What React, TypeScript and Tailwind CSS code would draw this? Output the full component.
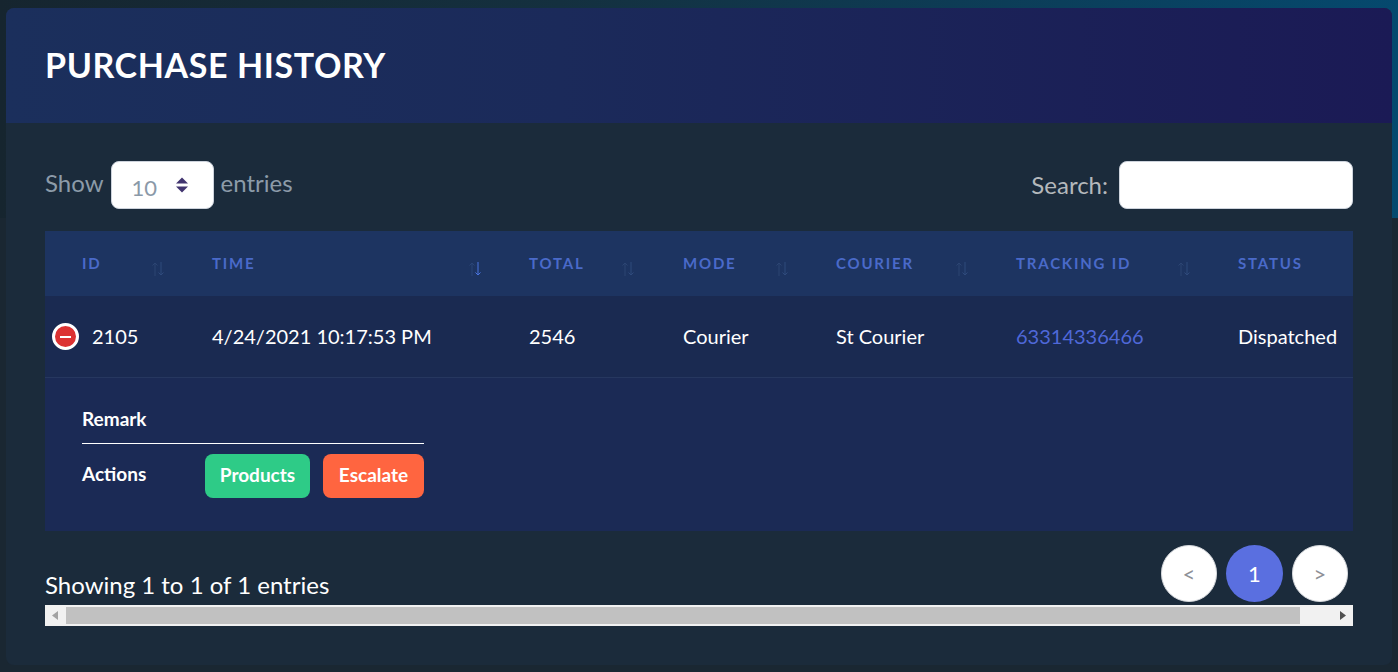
import { ChevronDown } from 'lucide-react';

const font = { fontFamily: 'Lato, "Open Sans", sans-serif' };

// header cells: label, column width, sort arrows position
const columns = [
  { label: 'ID', width: 'w-[130px]', sort: 'left-[105px]' },
  { label: 'TIME', width: 'w-[317px]', sort: 'left-[292px]', active: true },
  { label: 'TOTAL', width: 'w-[154px]', sort: 'left-[128px]' },
  { label: 'MODE', width: 'w-[153px]', sort: 'left-[128px]' },
  { label: 'COURIER', width: 'w-[180px]', sort: 'left-[155px]' },
  { label: 'TRACKING ID', width: 'w-[222px]', sort: 'left-[197px]' },
  { label: 'STATUS', width: 'w-[152px]' },
];

function SortArrows({ active }: { active?: boolean }) {
  return (
    <svg width="16" height="18" viewBox="0 0 16 18" fill="none" strokeWidth="1">
      <path d="M5 16V3M2.5 5.5 5 3l2.5 2.5" stroke={active ? '#2a4577' : '#2c4573'} />
      <path d="M11 2v13M8.5 12.5 11 15l2.5-2.5" stroke={active ? '#4a74e0' : '#2f4a7c'} />
    </svg>
  );
}

function PageButton({ label, current }: { label: string; current?: boolean }) {
  return (
    <div
      className={
        current
          ? 'flex h-[57px] w-[57px] items-center justify-center rounded-full bg-[#5a6fe0] text-[22px] text-white'
          : 'flex h-[57px] w-[56px] items-center justify-center rounded-full border border-[#d5d8dc] bg-white text-[22px] text-[#8d9096]'
      }
    >
      {label}
    </div>
  );
}

export default function App() {
  return (
    <div
      style={font}
      className="h-[672px] w-[1398px] overflow-hidden bg-[linear-gradient(90deg,#16252f_0%,#14303f_40%,#05496e_100%)]"
    >
      <div className="h-[672px] bg-[linear-gradient(180deg,transparent_0,transparent_218px,#1a2732_218px)] pl-[6px] pr-[6px] pt-[8px]">
        <div className="h-[657px] overflow-hidden rounded-lg bg-[#1b2b3b]">
          {/* Card header */}
          <div className="flex h-[115px] items-center bg-[linear-gradient(90deg,#1b2f5c_0%,#1b2a5a_40%,#1b1a55_100%)] pb-[2px] pl-[39px]">
            <h1 className="text-[34px] font-bold tracking-[0.6px] text-white">PURCHASE HISTORY</h1>
          </div>

          <div className="px-[39px] pt-[38px]">
            {/* Length and search controls */}
            <div className="flex h-[48px] items-center justify-between">
              <div className="flex items-center gap-[7px] text-[24px] text-[#8c9ba9]">
                <span className="relative -top-[2px]">Show</span>
                <div className="flex h-[48px] w-[103px] items-center justify-between rounded-lg border border-[#cdd3dc] bg-white pl-[20px] pr-[24px] text-[22px] text-[#8a99a8]">
                  <span className="relative top-[2px]">10</span>
                  <svg width="14" height="16" viewBox="0 0 14 16" fill="#41346f">
                    <path d="M7 0.5 13 6.5H1Z" />
                    <path d="M7 15.5 1 9.5H13Z" />
                  </svg>
                </div>
                <span className="relative -top-[2px]">entries</span>
              </div>
              <div className="flex items-center gap-[11px] text-[24px] text-[#b4b8bb]">
                <span>Search:</span>
                <input className="h-[48px] w-[234px] rounded-lg border border-[#cdd3dc] bg-white" />
              </div>
            </div>

            {/* Table */}
            <table className="mt-[22px] w-[1308px] table-fixed border-collapse">
              <thead>
                <tr className="h-[65px] bg-[#1d3461]">
                  {columns.map((col) => (
                    <th key={col.label} className={`relative ${col.width} p-0 pl-[37px] text-left align-middle`}>
                      <span className="relative -top-[1px] text-[15px] font-bold tracking-[1.8px] text-[#4a6ac9]">{col.label}</span>
                      {col.sort && (
                        <span className={`absolute top-[29px] ${col.sort}`}>
                          <SortArrows active={col.active} />
                        </span>
                      )}
                    </th>
                  ))}
                </tr>
              </thead>
              <tbody>
                <tr className="h-[81px] border-b border-[#26375f] bg-[#1a2a51] text-[20px] text-white">
                  <td className="relative p-0 pl-[47px]">
                    <span className="absolute left-[7px] top-[27px] flex h-[27px] w-[27px] items-center justify-center rounded-full border-[3px] border-white bg-[#dc3232]">
                      <span className="h-[2px] w-[11px] bg-white" />
                    </span>
                    2105
                  </td>
                  <td className="p-0 pl-[37px]">4/24/2021 10:17:53 PM</td>
                  <td className="p-0 pl-[37px]">2546</td>
                  <td className="p-0 pl-[37px]">Courier</td>
                  <td className="p-0 pl-[37px]">St Courier</td>
                  <td className="p-0 pl-[37px] text-[#4f68d8]">63314336466</td>
                  <td className="p-0 pl-[37px]">Dispatched</td>
                </tr>
                <tr className="h-[154px] bg-[#1b2a55]">
                  <td colSpan={7} className="p-0 pl-[37px] align-top">
                    <div className="w-[342px] text-[19px] font-bold text-white">
                      <div className="h-[66px] border-b border-white pt-[27px]">Remark</div>
                      <div className="flex items-start justify-between pt-[10px]">
                        <span className="pt-[6px]">Actions</span>
                        <div className="flex gap-[13px] pr-0">
                          <span className="flex h-[44px] w-[105px] items-center justify-center rounded-lg bg-[#2ecb87]">Products</span>
                          <span className="flex h-[44px] w-[101px] items-center justify-center rounded-lg bg-[#ff6540]">Escalate</span>
                        </div>
                      </div>
                    </div>
                  </td>
                </tr>
              </tbody>
            </table>

            {/* Info and pagination */}
            <div className="flex h-[74px] items-end justify-between pb-[3px] pr-[5px] pt-[14px]">
              <span className="relative -top-[5px] text-[24px] leading-none text-white">Showing 1 to 1 of 1 entries</span>
              <div className="flex gap-[9px]">
                <PageButton label="<" />
                <PageButton label="1" current />
                <PageButton label=">" />
              </div>
            </div>

            {/* Horizontal scrollbar */}
            <div className="flex h-[21px] w-[1308px] items-center bg-[#f1f1f1]">
              <div className="flex h-[21px] w-[21px] items-center justify-center">
                <svg width="7" height="9" viewBox="0 0 7 9" fill="#a3a3a3"><path d="M6 0 0 4.5 6 9Z" /></svg>
              </div>
              <div className="h-[17px] w-[1234px] bg-[#c1c1c1]" />
              <div className="flex h-[21px] flex-1 items-center justify-end pr-[7px]">
                <svg width="7" height="9" viewBox="0 0 7 9" fill="#505050"><path d="M1 0 7 4.5 1 9Z" /></svg>
              </div>
            </div>
          </div>
        </div>
      </div>
    </div>
  );
}
